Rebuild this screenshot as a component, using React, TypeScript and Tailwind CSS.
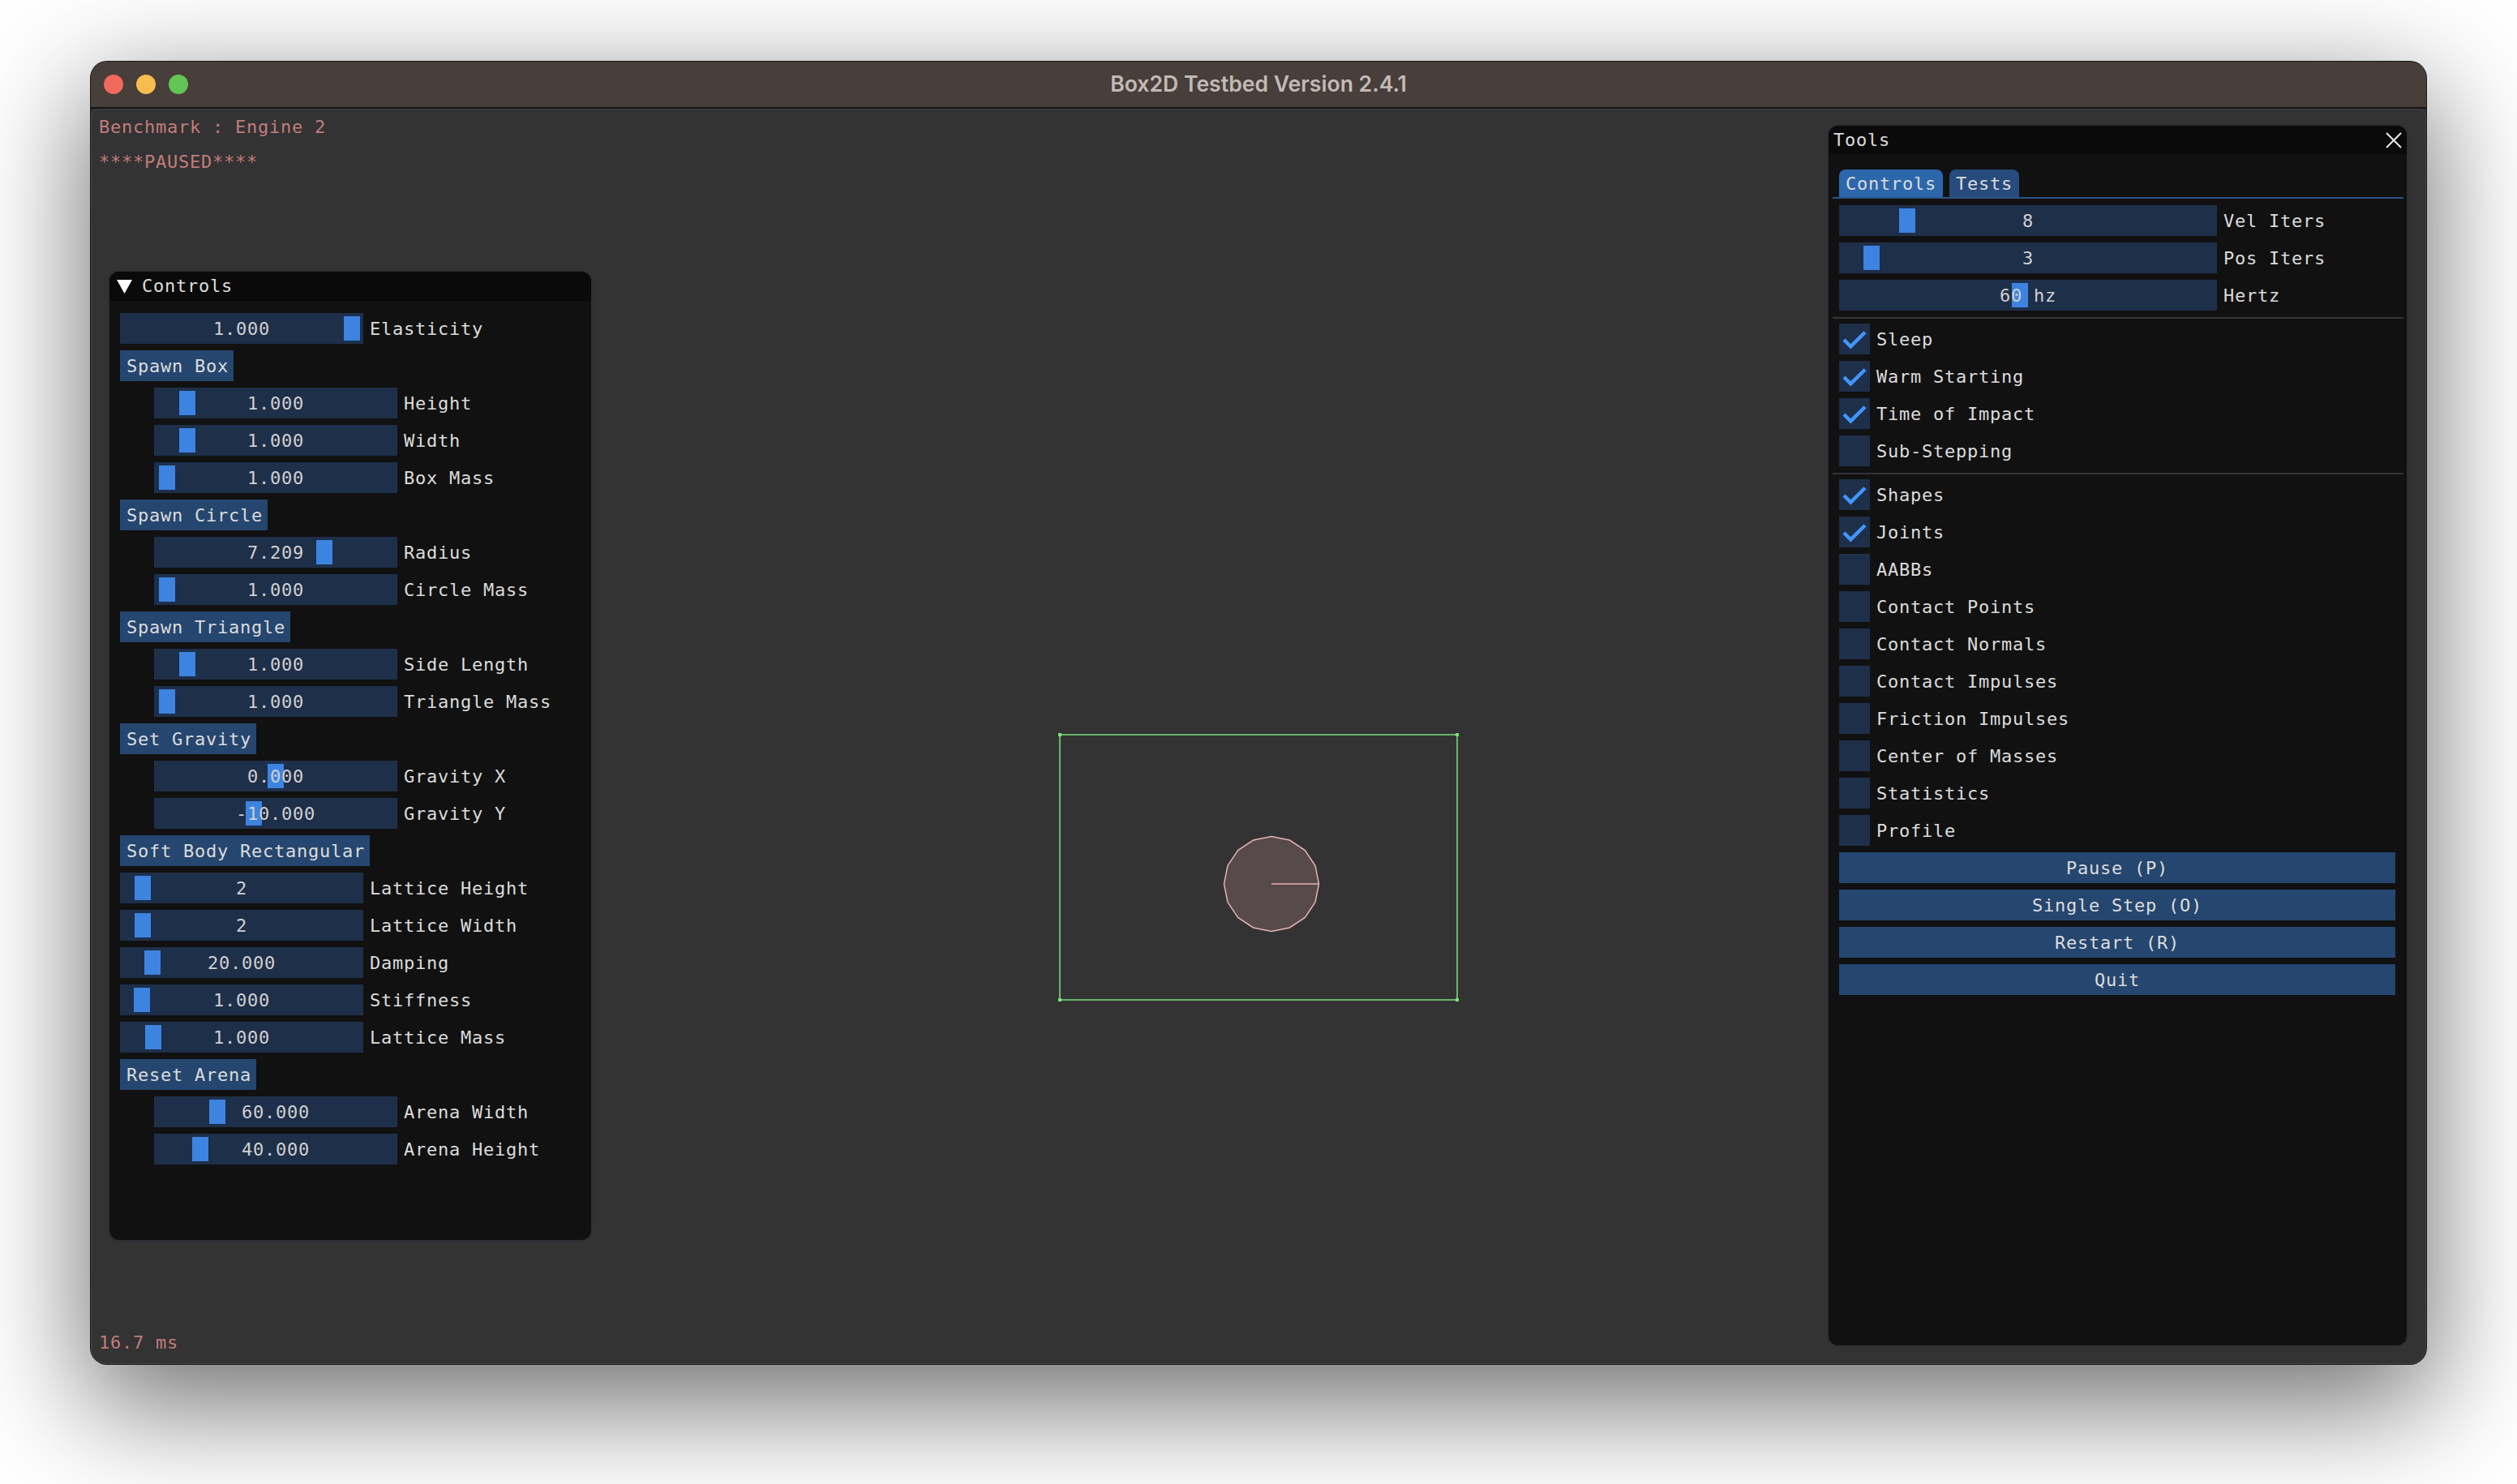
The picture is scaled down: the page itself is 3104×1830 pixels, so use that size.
const MONO = "font-['DejaVu_Sans_Mono',monospace] text-[22px] tracking-[0.756px] leading-[40px] text-[#dcdcdc]";

type SliderProps = { value: string; label: string; grab: number; width?: number; indent?: boolean };

// grab is the left edge of the handle, counted from the left edge of the track
function Slider({ value, label, grab, width = 300, indent = false }: SliderProps) {
  return (
    <div className={indent ? "flex h-[38px] gap-2 pl-[42px]" : "flex h-[38px] gap-2"}>
      <div className="relative h-[38px] shrink-0 bg-[#1e2f4a] text-center" style={{ width }}>
        <div className="absolute top-1 h-[30px] w-5 bg-[#3d83e0]" style={{ left: grab }} />
        <span className="relative text-[#d0d0d0]">{value}</span>
      </div>
      <span className="whitespace-pre">{label}</span>
    </div>
  );
}

function ActionButton({ label }: { label: string }) {
  return <div className="h-[38px] w-fit bg-[#25466f] pl-2 pr-[6px] whitespace-pre">{label}</div>;
}

function Check({ label, on = false }: { label: string; on?: boolean }) {
  return (
    <div className="flex h-[38px] gap-2">
      <div className="h-[38px] w-[38px] bg-[#1e2f4a]">
        {on && (
          <svg width="38" height="38" viewBox="0 0 38 38">
            <polyline points="6,20 14.3,28.3 32,10.7" fill="none" stroke="#4296fa" strokeWidth="4.4" />
          </svg>
        )}
      </div>
      <span className="whitespace-pre">{label}</span>
    </div>
  );
}

function WideButton({ label }: { label: string }) {
  return <div className="h-[38px] w-[686px] bg-[#25466f] text-center whitespace-pre">{label}</div>;
}

function ControlsPanel() {
  return (
    <div className="absolute left-[21px] top-[199px] h-[1198px] w-[598px] overflow-hidden rounded-[14px] border-2 border-[#2e2e35] bg-[#111111]">
      <div className="flex h-[36px] items-center gap-[12px] bg-[#0a0a0a] pl-[9px] leading-[36px]">
        <svg width="19" height="17" viewBox="0 0 19 17">
          <polygon points="0,0 19,0 9.5,17" fill="#ffffff" />
        </svg>
        <span>Controls</span>
      </div>
      <div className="flex flex-col gap-2 pl-[13px] pt-[15px]">
        <Slider value="1.000" label="Elasticity" grab={276} />
        <ActionButton label="Spawn Box" />
        <Slider indent value="1.000" label="Height" grab={31} />
        <Slider indent value="1.000" label="Width" grab={31} />
        <Slider indent value="1.000" label="Box Mass" grab={6} />
        <ActionButton label="Spawn Circle" />
        <Slider indent value="7.209" label="Radius" grab={200} />
        <Slider indent value="1.000" label="Circle Mass" grab={6} />
        <ActionButton label="Spawn Triangle" />
        <Slider indent value="1.000" label="Side Length" grab={31} />
        <Slider indent value="1.000" label="Triangle Mass" grab={6} />
        <ActionButton label="Set Gravity" />
        <Slider indent value="0.000" label="Gravity X" grab={140} />
        <Slider indent value="-10.000" label="Gravity Y" grab={113} />
        <ActionButton label="Soft Body Rectangular" />
        <Slider value="2" label="Lattice Height" grab={18} />
        <Slider value="2" label="Lattice Width" grab={18} />
        <Slider value="20.000" label="Damping" grab={30} />
        <Slider value="1.000" label="Stiffness" grab={17} />
        <Slider value="1.000" label="Lattice Mass" grab={31} />
        <ActionButton label="Reset Arena" />
        <Slider indent value="60.000" label="Arena Width" grab={68} />
        <Slider indent value="40.000" label="Arena Height" grab={47} />
      </div>
    </div>
  );
}

function ToolsPanel() {
  return (
    <div className="absolute left-[2141px] top-[19px] h-[1508px] w-[717px] overflow-hidden rounded-[14px] border-2 border-[#2e2e35] bg-[#111111]">
      <div className="flex h-[35px] items-center justify-between bg-[#0a0a0a] pl-[6px] pr-[6px] leading-[35px]">
        <span>Tools</span>
        <svg width="20" height="20" viewBox="0 0 20 20">
          <path d="M1 1 L19 19 M19 1 L1 19" stroke="#ececec" strokeWidth="2" />
        </svg>
      </div>
      <div className="flex flex-col pl-[13px] pt-[19px]">
        <div className="flex h-[34px] gap-2 leading-[36px]">
          <div className="rounded-t-lg bg-[#2c67ac] px-2">Controls</div>
          <div className="rounded-t-lg bg-[#264b7c] px-2">Tests</div>
        </div>
        <div className="-ml-2 mb-2 h-[2px] w-[704px] bg-[#2c5488]" />
        <div className="flex flex-col gap-2">
          <Slider width={466} value="8" label="Vel Iters" grab={74} />
          <Slider width={466} value="3" label="Pos Iters" grab={30} />
          <Slider width={466} value="60 hz" label="Hertz" grab={213} />
        </div>
        <div className="-ml-2 mb-[6px] mt-2 h-[2px] w-[704px] bg-[#33333b]" />
        <div className="flex flex-col gap-2">
          <Check on label="Sleep" />
          <Check on label="Warm Starting" />
          <Check on label="Time of Impact" />
          <Check label="Sub-Stepping" />
        </div>
        <div className="-ml-2 mb-[6px] mt-2 h-[2px] w-[704px] bg-[#33333b]" />
        <div className="flex flex-col gap-2">
          <Check on label="Shapes" />
          <Check on label="Joints" />
          <Check label="AABBs" />
          <Check label="Contact Points" />
          <Check label="Contact Normals" />
          <Check label="Contact Impulses" />
          <Check label="Friction Impulses" />
          <Check label="Center of Masses" />
          <Check label="Statistics" />
          <Check label="Profile" />
          <WideButton label="Pause (P)" />
          <WideButton label="Single Step (O)" />
          <WideButton label="Restart (R)" />
          <WideButton label="Quit" />
        </div>
      </div>
    </div>
  );
}

// the world view: arena walls and the one circle, in window coordinates minus the svg's corner
function Arena() {
  const cx = 268;
  const cy = 190;
  const r = 58.5;
  const pts = Array.from({ length: 16 }, (_, i) => {
    const a = (i * Math.PI * 2) / 16;
    return `${(cx + r * Math.cos(a)).toFixed(1)},${(cy + r * Math.sin(a)).toFixed(1)}`;
  }).join(" ");
  const corners = [
    [7, 6],
    [497, 6],
    [7, 333],
    [497, 333],
  ];
  return (
    <svg className="absolute left-[1188px] top-[766px]" width="504" height="340" viewBox="0 0 504 340">
      <rect x="7" y="6" width="490" height="327" fill="none" stroke="#7de07d" strokeWidth="1.5" />
      {corners.map(([x, y]) => (
        <rect key={`${x}-${y}`} x={x - 2} y={y - 2} width="4" height="4" fill="#7de07d" />
      ))}
      <polygon points={pts} fill="#574a4a" stroke="#e6b3b3" strokeWidth="1.5" />
      <line x1={cx} y1={cy} x2={cx + r} y2={cy} stroke="#e6b3b3" strokeWidth="1.5" />
    </svg>
  );
}

export default function App() {
  return (
    <div className={`h-[1830px] w-[3104px] overflow-hidden bg-white pl-[112px] pt-[76px] ${MONO}`}>
      <div className="flex h-[1606px] w-[2880px] flex-col overflow-hidden rounded-[20px] bg-[#333333] shadow-[0_44px_140px_8px_rgba(0,0,0,0.56),0_0_0_1px_#1e1e1e]">
        <div className="relative flex h-[58px] shrink-0 items-center justify-center border-b-2 border-[#161412] bg-[#483e3a] pb-[2px]">
          <div className="absolute left-4 top-4 flex gap-4">
            <div className="h-6 w-6 rounded-full bg-[#f0695c]" />
            <div className="h-6 w-6 rounded-full bg-[#f6bd4f]" />
            <div className="h-6 w-6 rounded-full bg-[#62c554]" />
          </div>
          <span className="font-['Inter',sans-serif] text-[26.6px] font-semibold leading-none tracking-normal text-[#c2bab6]">
            Box2D Testbed Version 2.4.1
          </span>
        </div>
        <div className="relative flex-1 rounded-b-[20px] rounded-t-[10px] shadow-[inset_0_0_0_1px_#454545]">
          <div className="flex h-full flex-col justify-between pb-[6px] pl-[10px] pt-[3px] text-[#c27c7c]">
            <div className="flex flex-col gap-[3px]">
              <span>Benchmark : Engine 2</span>
              <span>****PAUSED****</span>
            </div>
            <span>16.7 ms</span>
          </div>
          <Arena />
          <ControlsPanel />
          <ToolsPanel />
        </div>
      </div>
    </div>
  );
}
